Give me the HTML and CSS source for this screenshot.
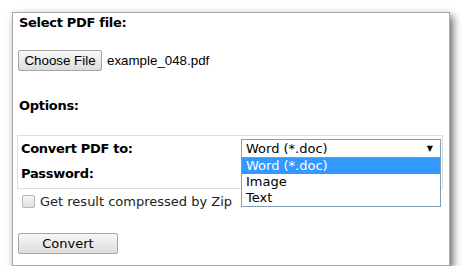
FILE: index.html
```html
<!DOCTYPE html>
<html lang="en">
<head>
    <meta charset="UTF-8">
    <title>PDF Converter</title>
    <link rel="stylesheet" href="styles.css">
</head>
<body>
    <!-- Converter window -->
    <div class="window">
        <div class="label title">Select PDF file:</div>

        <!-- File picker -->
        <div class="file-row">
            <button class="file-button">Choose File</button>
            <span class="file-name">example_048.pdf</span>
        </div>

        <div class="label options">Options:</div>

        <!-- Options table -->
        <div class="options-box">
            <div class="opt-row">
                <div class="label">Convert PDF to:</div>
                <div class="select-wrap">
                    <div class="select">
                        <span>Word (*.doc)</span>
                        <span class="arrow">&#9660;</span>
                    </div>
                    <ul class="dropdown">
                        <li class="active">Word (*.doc)</li>
                        <li>Image</li>
                        <li>Text</li>
                    </ul>
                </div>
            </div>
            <div class="opt-row">
                <div class="label">Password:</div>
            </div>
        </div>

        <!-- Zip checkbox -->
        <label class="check-row">
            <span class="checkbox"></span>
            <span>Get result compressed by Zip</span>
        </label>

        <button class="convert-button">Convert</button>
    </div>
</body>
</html>
```

FILE: styles.css
```css
/* Page */
body {
    margin: 0;
    background: #fff;
    font-family: "DejaVu Sans", Verdana, sans-serif;
    font-size: 13px;
    color: #000;
}

/* Window with drop shadow */
.window {
    margin: 12px 0 0 12px;
    width: 431px;
    height: 252px;
    box-sizing: content-box;
    border: 1px solid #a8a8a8;
    background: #fff;
    box-shadow: 3px 4px 8px rgba(0, 0, 0, 0.6);
    padding: 0 0 0 5px;
}

.label {
    font-weight: bold;
    line-height: 15px;
    letter-spacing: -0.3px;
}

.title {
    margin: 2px 0 0 1px;
}

/* File picker row */
.file-row {
    display: flex;
    align-items: center;
    margin-top: 20px;
    height: 21px;
}

.file-button,
.convert-button {
    height: 21px;
    padding: 0;
    border: 1px solid #a6a6a6;
    border-radius: 2px;
    background: linear-gradient(#f7f7f7, #dddddd);
    color: #000;
    cursor: pointer;
}

.file-button {
    width: 84px;
    font-family: "Liberation Sans", Arial, sans-serif;
    font-size: 13.33px;
}

.file-name {
    margin-left: 5px;
    font-family: "Liberation Sans", Arial, sans-serif;
    font-size: 13.33px;
}

.options {
    margin: 27px 0 0 1px;
}

/* Options table */
.options-box {
    margin: 22px 0 0 -1px;
    width: 421px;
    height: 51px;
    border: 1px solid #dcdcdc;
    padding: 1px 0 0 3px;
    box-sizing: content-box;
}

.opt-row {
    display: grid;
    grid-template-columns: 220px 200px;
    height: 25px;
    padding-top: 2px;
    box-sizing: border-box;
}

.opt-row .label {
    padding-top: 2px;
}

.select-wrap {
    position: relative;
}

.select {
    display: flex;
    justify-content: space-between;
    align-items: center;
    height: 19px;
    border: 1px solid #7d9fd6;
    box-sizing: border-box;
    padding: 0 7px 0 4px;
    line-height: 17px;
    background: #fff;
}

.arrow {
    font-size: 8px;
}

.dropdown {
    position: absolute;
    top: 18px;
    left: 0;
    width: 200px;
    box-sizing: border-box;
    margin: 0;
    padding: 0;
    list-style: none;
    border: 1px solid #7f9db9;
    background: #fff;
    z-index: 2;
}

.dropdown li {
    height: 16px;
    line-height: 16px;
    padding-left: 4px;
}

.dropdown li.active {
    background: #3399ff;
    color: #fff;
}

/* Checkbox row */
.check-row {
    display: flex;
    align-items: center;
    margin-top: 5px;
    height: 15px;
    color: #222;
}

.checkbox {
    width: 11px;
    height: 11px;
    margin: 0 5px 0 4px;
    border: 1px solid #b5b5b5;
    border-radius: 2px;
    background: linear-gradient(#f4f4f4, #e2e2e2);
}

.convert-button {
    display: block;
    margin-top: 24px;
    width: 100px;
    font-family: "DejaVu Sans", Verdana, sans-serif;
    font-size: 13px;
}
```
